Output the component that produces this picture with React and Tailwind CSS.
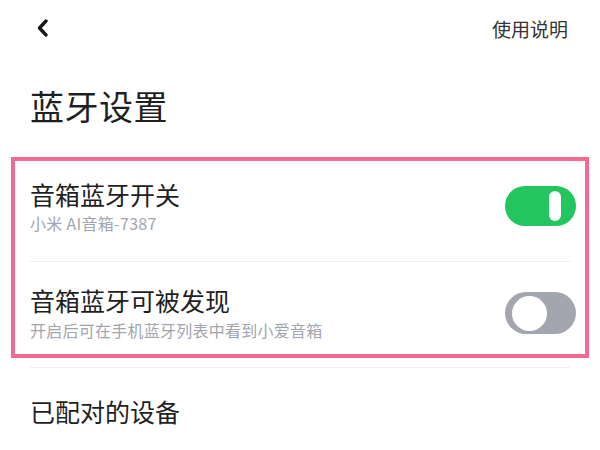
export default function App() {
	const font = { fontFamily: '"Noto Sans CJK SC", "Noto Sans", sans-serif' };

	return (
		<div className="w-[600px] h-[450px] bg-white overflow-hidden text-[#1f1f1f]" style={font}>
			{/* Top bar */}
			<div className="flex items-center justify-between pl-[36px] pr-[32px] pt-[16px] h-[40px]">
				<svg width="14" height="18" viewBox="0 0 14 18">
					<path d="M10 2 L3.5 9 L10 16" fill="none" stroke="#1a1a1a" strokeWidth="3.4" strokeLinecap="round" strokeLinejoin="round" />
				</svg>
				<span className="text-[19px] leading-none text-[#333]">使用说明</span>
			</div>

			{/* Title */}
			<h1 className="pl-[30px] mt-[49px] text-[34px] leading-none font-normal tracking-[0.5px]">蓝牙设置</h1>

			{/* Highlighted settings */}
			<div className="mx-[11px] mt-[34px] border-[4px] border-[#f36b92]">
				<div className="mx-[15px] flex items-center justify-between h-[101px] pb-[10px] border-b border-[#eeeeee]">
					<div>
						<p className="text-[25px] leading-none">音箱蓝牙开关</p>
						<p className="text-[16px] leading-none text-[#a2a5ad] mt-[8px] tracking-[0.3px]">小米 AI音箱-7387</p>
					</div>
					<div className="w-[71px] h-[40px] rounded-full bg-[#22c55e] flex items-center justify-end pr-[15px] -mr-[6px]">
						<div className="w-[12px] h-[30px] rounded-full bg-white" />
					</div>
				</div>
				<div className="mx-[15px] flex items-center justify-between h-[92px] pt-[10px]">
					<div>
						<p className="text-[25px] leading-none">音箱蓝牙可被发现</p>
						<p className="text-[16px] leading-none text-[#a2a5ad] mt-[9px] tracking-[0.25px]">开启后可在手机蓝牙列表中看到小爱音箱</p>
					</div>
					<div className="w-[71px] h-[42px] rounded-full bg-[#a3a6af] flex items-center pl-[7px] -mr-[6px]">
						<div className="w-[35px] h-[35px] rounded-full bg-white" />
					</div>
				</div>
			</div>

			<div className="mx-[30px] mt-[9px] border-t border-[#eeeeee]" />

			<p className="pl-[30px] mt-[31px] text-[25px] leading-none">已配对的设备</p>
		</div>
	);
}
